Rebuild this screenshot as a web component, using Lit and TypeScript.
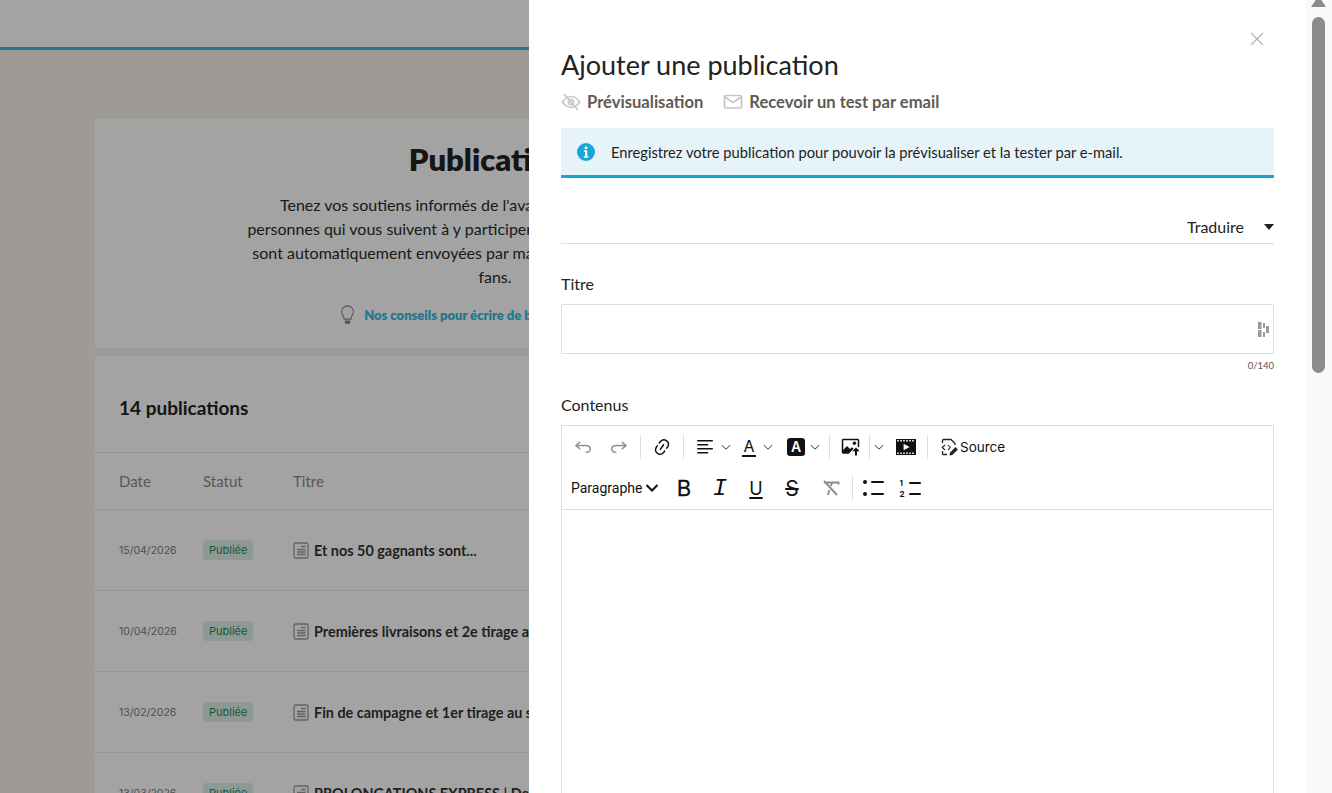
import { LitElement, html, css } from "lit";
import { customElement } from "lit/decorators.js";

const chevron = html`<svg class="chev" viewBox="0 0 10 10" width="10" height="10" fill="none" stroke="#333" stroke-width="1"><path d="M.8 3.200 5 7.200l4.200-4"/></svg>`;
const chevronBold = html`<svg class="chev" viewBox="0 0 14 14" width="14" height="14" fill="none" stroke="#111" stroke-width="2"><path d="M1.500 4 7 9.500 12.500 4"/></svg>`;

const icons = {
  undo: html`<svg viewBox="0 0 20 20" width="20" height="20"><path fill="#8f8f8f" d="m5.042 9.367 2.189 1.837a.75.75 0 0 1-.965 1.149l-3.788-3.18a.747.747 0 0 1-.21-.284.75.75 0 0 1 .17-.945L6.23 4.762a.75.75 0 1 1 .964 1.15L4.863 7.866h8.917A.75.75 0 0 1 14 7.9a4 4 0 1 1-1.477 7.718l.344-1.489a2.5 2.5 0 1 0 1.094-4.73l.008-.032H5.042z"/></svg>`,
  redo: html`<svg viewBox="0 0 20 20" width="20" height="20"><path fill="#8f8f8f" d="m14.958 9.367-2.189 1.837a.75.75 0 0 0 .965 1.149l3.788-3.18a.747.747 0 0 0 .21-.284.75.75 0 0 0-.17-.945L13.77 4.762a.75.75 0 1 0-.964 1.15l2.331 1.954H6.22A.75.75 0 0 0 6 7.9a4 4 0 1 0 1.477 7.718l-.344-1.489A2.5 2.5 0 1 1 6.039 9.4l-.008-.032h8.927z"/></svg>`,
  link: html`<svg viewBox="0 0 20 20" width="20" height="20"><path fill="#111" d="m11.077 15 .991-1.416a.75.75 0 1 1 1.229.86l-1.148 1.64a.748.748 0 0 1-.217.206 5.251 5.251 0 0 1-8.503-5.955.741.741 0 0 1 .12-.274l1.147-1.639a.75.75 0 1 1 1.228.86L4.933 10.7l.006.003a3.75 3.75 0 0 0 6.132 4.294l.006.004zm5.494-5.335a.748.748 0 0 1-.12.274l-1.147 1.639a.75.75 0 1 1-1.228-.86l.86-1.23a3.75 3.75 0 0 0-6.144-4.301l-.86 1.229a.75.75 0 0 1-1.229-.86l1.148-1.64a.748.748 0 0 1 .217-.206 5.251 5.251 0 0 1 8.503 5.955zm-4.563-2.532a.75.75 0 0 1 .184 1.045l-3.155 4.505a.75.75 0 1 1-1.229-.86l3.155-4.506a.75.75 0 0 1 1.045-.184z"/></svg>`,
  align: html`<svg viewBox="0 0 20 20" width="20" height="20"><path fill="#111" d="M2 3.75c0 .414.336.75.75.75h14.5a.75.75 0 1 0 0-1.5H2.75a.75.75 0 0 0-.75.75zm0 8c0 .414.336.75.75.75h14.5a.75.75 0 1 0 0-1.5H2.75a.75.75 0 0 0-.75.75zm0 4c0 .414.336.75.75.75h9.929a.75.75 0 1 0 0-1.5H2.75a.75.75 0 0 0-.75.75zm0-8c0 .414.336.75.75.75h9.929a.75.75 0 1 0 0-1.5H2.75a.75.75 0 0 0-.75.75z"/></svg>`,
  image: html`<svg viewBox="0 0 20 20" width="20" height="20"><path fill="none" stroke="#111" stroke-width="1.500" d="M8 16H2.200a.7.7 0 0 1-.7-.7V3.200a.7.7 0 0 1 .7-.7h14.600a.7.7 0 0 1 .7.7V10"/><circle cx="13.400" cy="6.200" r="1.700" fill="#111"/><path fill="#111" d="M2 15.800v-2.600l4-4.200 3 3 2-1.800 1.600 1.400-4 4.400zM15 10.500l3.800 3.700h-2.800v4.300h-2v-4.300h-2.800z"/></svg>`,
  film: html`<svg viewBox="0 0 20 20" width="20" height="20"><path fill="#111" fill-rule="evenodd" d="M0 2h20v16H0zM1.200 3v1.400h1.600V3zm3 0v1.400h1.600V3zm3 0v1.400h1.600V3zm3 0v1.400h1.600V3zm3 0v1.400h1.600V3zm3 0v1.400h1.600V3zM1.200 15.600V17h1.600v-1.400zm3 0V17h1.600v-1.400zm3 0V17h1.600v-1.400zm3 0V17h1.600v-1.400zm3 0V17h1.600v-1.400zm3 0V17h1.600v-1.400zM7.600 6.800v6.400l6-3.200z"/></svg>`,
  source: html`<svg viewBox="0 0 20 20" width="20" height="20" fill="none" stroke="#222" stroke-width="1.300"><path d="M3.500 6V3.500a1 1 0 0 1 1-1H12l4 4V8M3.500 14v2.500a1 1 0 0 0 1 1H8"/><path d="M6 8 3.200 10.500 6 13M9 8l2.300 2.500L9 13" stroke-width="1.100"/><path d="M10.500 18.500l.4-2.800 5.600-5.600 2.400 2.400-5.600 5.600z" fill="#222" stroke="none"/></svg>`,
  clear: html`<svg viewBox="0 0 20 20" width="20" height="20" fill="none" stroke="#8c8c8c" stroke-width="1.900"><path d="M3 4.500h14.500v2M11 4.500l-1 3.500M8.200 12l-1.200 5M3 3l13 14"/></svg>`,
  bullets: html`<svg viewBox="0 0 24 20" width="24" height="20" fill="#111"><circle cx="3" cy="4" r="2"/><circle cx="3" cy="16" r="2"/><rect x="9" y="3" width="13" height="2" rx="1"/><rect x="9" y="15" width="13" height="2" rx="1"/></svg>`,
  eyeOff: html`<svg viewBox="0 0 20 20" width="20" height="20" fill="none" stroke="#c6c6c6" stroke-width="1.700"><path d="M1.500 10s3-5.500 8.500-5.500 8.500 5.500 8.500 5.500-3 5.500-8.500 5.500S1.500 10 1.500 10z"/><circle cx="10" cy="10" r="2.600"/><path d="M3 2l14 16"/></svg>`,
  mail: html`<svg viewBox="0 0 20 20" width="20" height="20" fill="none" stroke="#c6c6c6" stroke-width="1.700"><rect x="1.500" y="3.500" width="17" height="12.500" rx="1.500"/><path d="M2 5l8 5.500L18 5"/></svg>`,
  info: html`<svg viewBox="0 0 18 18" width="18" height="18"><circle cx="9" cy="9" r="9" fill="#1aa5d8"/><circle cx="9" cy="4.700" r="1.500" fill="#fff"/><path fill="#fff" d="M6.800 7.300h3.400v6h1.100v1.400H6.800v-1.400h1.400V8.700H6.800z"/></svg>`,
  close: html`<svg viewBox="0 0 14 14" width="14" height="14" fill="none" stroke="#bdb7ab" stroke-width="1.400"><path d="M1 1l12 12M13 1L1 13"/></svg>`,
  caret: html`<svg viewBox="0 0 10 6" width="10" height="6"><path fill="#222" d="M0 0h10L5 6z"/></svg>`,
  bulb: html`<svg viewBox="0 0 16 22" width="15" height="20" fill="none" stroke="#8a8a8a" stroke-width="1.200"><path d="M8 1a6.500 6.500 0 0 0-6.500 6.500c0 2.800 2.200 4.500 2.800 8h7.400c.6-3.500 2.800-5.200 2.800-8A6.500 6.500 0 0 0 8 1z"/><path d="M5 17h6v2.500l-1 1.500H6l-1-1.500z" fill="#8a8a8a" stroke="none"/></svg>`,
  doc: html`<svg viewBox="0 0 16 17" width="16" height="17" fill="none" stroke="#9a9a9a" stroke-width="1.300"><rect x="1" y="1" width="14" height="15" rx="1.500"/><path d="M8 4.500h4.500M4 7.500h8.500M4 10h8.500M4 12.500h8.500"/></svg>`,
  grammar: html`<svg viewBox="0 0 11 15" width="11" height="15" fill="#9a9a9a"><rect x="0" y="0" width="3.500" height="7"/><rect x="0" y="8" width="3.500" height="7"/><rect x="5" y="1" width="2" height="5"/><rect x="5" y="10" width="2" height="5"/><rect x="8" y="4" width="3" height="7"/></svg>`,
};

const rows = [
  ["15/04/2026", "Et nos 50 gagnants sont..."],
  ["10/04/2026", "Premières livraisons et 2e tirage au sort"],
  ["13/02/2026", "Fin de campagne et 1er tirage au sort"],
  ["13/03/2026", "PROLONGATIONS EXPRESS | Dernière ligne droite"],
];

@customElement("app-root")
export class AppRoot extends LitElement {
  static styles = css`
    :host {
      display: block;
      position: relative;
      height: 793px;
      overflow: hidden;
      background: #f8f3ec;
      font-family: "Lato", "Noto Sans", sans-serif;
      color: #222;
    }
    svg { display: block; flex: none; }

    /* page behind the drawer */
    .topbar { height: 47px; background: #fff; border-bottom: 3px solid #3ab7df; }
    .main { width: 800px; margin: 69px 0 0 95px; display: flex; flex-direction: column; gap: 8px; }
    .card { background: #fff; }
    .hero { height: 229px; padding-top: 22px; box-sizing: border-box; text-align: center; }
    .hero h1 { margin: 0; font-size: 31px; line-height: 36px; font-weight: 800; color: #222; }
    .hero p { margin: 16px 0 0; font-size: 16px; line-height: 24px; color: #2b2b2b; }
    .tip { display: flex; justify-content: center; align-items: center; gap: 9px; margin-top: 16px; padding-right: 17px; font-size: 13px; font-weight: 800; color: #3ab7df; }
    .list-head { height: 97px; padding: 7px 0 0 24px; display: flex; align-items: center; font-size: 19px; font-weight: 700; border-bottom: 1px solid #f0ebe3; box-sizing: border-box; }
    .row { display: grid; grid-template-columns: 84px 90px 1fr; padding-left: 24px; align-items: center; border-bottom: 1px solid #f0ebe3; height: 81px; box-sizing: border-box; white-space: nowrap; }
    .row.head { height: 57px; font-size: 15px; color: #8a8a8a; }
    .date { font-family: "Inter", sans-serif; font-size: 10.500px; color: #7c7c7c; }
    .badge { justify-self: start; font-family: "Inter", sans-serif; font-size: 11px; line-height: 20px; padding: 0 6px; border-radius: 3px; background: #e0efe8; color: #1d8a5f; }
    .title { display: flex; align-items: center; gap: 5px; font-size: 14.400px; font-weight: 700; color: #333; }
    .overlay { position: absolute; inset: 0; background: rgba(0, 0, 0, 0.36); }

    /* drawer */
    .drawer { position: absolute; top: 0; bottom: 0; left: 529px; right: 0; background: #fff; display: flex; }
    .panel { position: relative; width: 777px; padding: 0 32px; box-sizing: border-box; flex: none; }
    .close { position: absolute; top: 32px; right: 42px; }
    h2 { margin: 0; padding-top: 48px; font-size: 27px; line-height: 33px; font-weight: 400; color: #222; }
    .actions { display: flex; gap: 20px; margin-top: 11px; height: 20px; font-size: 16.600px; font-weight: 700; color: #5e5a55; }
    .actions span { display: flex; align-items: center; gap: 6px; }
    .notice { display: flex; align-items: center; gap: 16px; height: 50px; margin-top: 16px; padding-left: 16px; background: #e6f4fa; border-bottom: 3px solid #1aa5d8; box-sizing: border-box; font-size: 14.700px; color: #222; }
    .translate { display: flex; justify-content: flex-end; align-items: center; gap: 20px; height: 66px; padding-top: 32px; box-sizing: border-box; border-bottom: 1px solid #e3ddd2; font-size: 16px; }
    .translate svg { margin-top: 1px; }
    label { display: block; font-size: 16px; line-height: 20px; color: #222; }
    .f-title { margin-top: 30px; }
    .input { display: flex; justify-content: flex-end; align-items: center; height: 50px; margin-top: 10px; padding-right: 4px; border: 1px solid #e3ddd2; border-radius: 2px; box-sizing: border-box; }
    .count { text-align: right; font-size: 9.500px; line-height: 12px; margin-top: 6px; color: #555; }
    .f-content { margin-top: 23px; }
    .editor { margin-top: 10px; border: 1px solid #e3ddd2; font-family: "Inter", sans-serif; color: #111; }
    .toolbar { display: flex; flex-direction: column; gap: 5px; padding: 3px; border-bottom: 1px solid #e3ddd2; }
    .tb-row { display: flex; height: 36px; align-items: center; }
    .btn { display: flex; align-items: center; justify-content: center; width: 36px; height: 36px; flex: none; }
    .btn.narrow { width: 18px; }
    .btn.nudge { margin-left: 3px; }
    .drop { display: flex; align-items: center; width: 44px; flex: none; }
    .drop.wide { width: 47px; }
    .drop .chev { margin-left: -2px; }
    .drop.wide .chev { margin-left: -4px; }
    .sep { width: 1px; height: 24px; margin: 0 3px; background: #e3ddd2; flex: none; }
    .sep.more { margin: 0 3px 0 4px; }
    .sep.thin { margin: 0; }
    .fa { width: 14px; text-align: center; font-size: 16px; line-height: 16px; border-bottom: 2px solid #111; padding-bottom: 1px; }
    .hl { width: 18px; height: 18px; line-height: 18px; text-align: center; font-size: 14px; font-weight: 600; color: #fff; background: #111; border-radius: 3px; }
    .source { display: flex; align-items: center; gap: 1px; margin-left: 8px; font-size: 13.500px; line-height: 16px; }
    .para { display: flex; align-items: center; justify-content: space-between; width: 101px; padding: 0 7px 0 6px; box-sizing: border-box; font-family: "Roboto", sans-serif; font-size: 14px; flex: none; }
    .b { font-weight: 400; font-size: 22px; -webkit-text-stroke: 0.300px #111; }
    .i { font-family: "Liberation Mono", monospace; font-style: italic; font-size: 24px; }
    .u { text-decoration: underline; text-underline-offset: 2px; text-decoration-thickness: 1.500px; font-size: 18px; }
    .s { text-decoration: line-through; text-decoration-thickness: 1.500px; font-size: 21px; }
    .nums { display: grid; grid-template-columns: 7px 12px; column-gap: 2px; row-gap: 3px; align-items: center; font-size: 8px; line-height: 8px; width: 21px; }
    .nums i { display: block; height: 2px; background: #111; border-radius: 1px; }
    .body { height: 400px; }

    /* scrollbar */
    .scroll { flex: 1; background: #fafafa; display: flex; flex-direction: column; align-items: center; padding-right: 1px; }
    .arrow { width: 15px; height: 7px; background: #8c8c8c; clip-path: polygon(50% -60%, 100% 100%, 0 100%); }
    .thumb { width: 13px; height: 356px; margin-top: 10px; background: #8c8c8c; border-radius: 7px; }
  `;

  render() {
    return html`
      <div class="topbar"></div>
      <div class="main">
        <section class="card hero">
          <h1>Publications</h1>
          <p>
            Tenez vos soutiens informés de l'avancement de votre projet !<br />
            personnes qui vous suivent à y participer. Vos publications sont visibles<br />
            sont automatiquement envoyées par mail à vos contributeurs et à vos<br />
            fans.
          </p>
          <div class="tip">${icons.bulb}Nos conseils pour écrire de belles publications</div>
        </section>
        <section class="card">
          <div class="list-head">14 publications</div>
          <div class="row head"><span>Date</span><span>Statut</span><span>Titre</span></div>
          ${rows.map(
            ([date, title]) => html`
              <div class="row">
                <span class="date">${date}</span>
                <span class="badge">Publiée</span>
                <span class="title">${icons.doc}${title}</span>
              </div>
            `
          )}
        </section>
      </div>
      <div class="overlay"></div>

      <aside class="drawer">
        <div class="panel">
          <span class="close">${icons.close}</span>
          <h2>Ajouter une publication</h2>
          <div class="actions">
            <span>${icons.eyeOff}Prévisualisation</span>
            <span>${icons.mail}Recevoir un test par email</span>
          </div>
          <div class="notice">${icons.info}Enregistrez votre publication pour pouvoir la prévisualiser et la tester par e-mail.</div>
          <div class="translate">Traduire ${icons.caret}</div>

          <label class="f-title">Titre</label>
          <div class="input">${icons.grammar}</div>
          <div class="count">0/140</div>

          <label class="f-content">Contenus</label>
          <div class="editor">
            <div class="toolbar">
              <div class="tb-row">
                <span class="btn">${icons.undo}</span>
                <span class="btn">${icons.redo}</span>
                <span class="sep"></span>
                <span class="btn">${icons.link}</span>
                <span class="sep"></span>
                <span class="drop"><span class="btn">${icons.align}</span>${chevron}</span>
                <span class="drop wide"><span class="btn"><span class="fa">A</span></span>${chevron}</span>
                <span class="drop wide"><span class="btn"><span class="hl">A</span></span>${chevron}</span>
                <span class="sep more"></span>
                <span class="btn">${icons.image}</span>
                <span class="sep thin"></span>
                <span class="btn narrow">${chevron}</span>
                <span class="btn">${icons.film}</span>
                <span class="sep"></span>
                <span class="source">${icons.source}Source</span>
              </div>
              <div class="tb-row">
                <span class="para">Paragraphe ${chevronBold}</span>
                <span class="btn"><span class="b">B</span></span>
                <span class="btn"><span class="i">I</span></span>
                <span class="btn"><span class="u">U</span></span>
                <span class="btn"><span class="s">S</span></span>
                <span class="btn nudge">${icons.clear}</span>
                <span class="sep"></span>
                <span class="btn">${icons.bullets}</span>
                <span class="btn"><span class="nums"><b>1</b><i></i><b>2</b><i></i></span></span>
              </div>
            </div>
            <div class="body"></div>
          </div>
        </div>
        <div class="scroll"><div class="arrow"></div><div class="thumb"></div></div>
      </aside>
    `;
  }
}
